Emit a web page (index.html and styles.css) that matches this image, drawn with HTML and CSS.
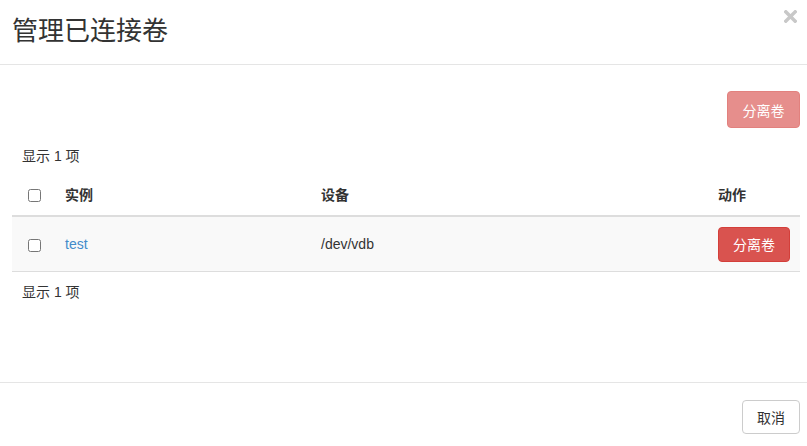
FILE: index.html
```html
<!DOCTYPE html>
<html lang="zh-CN">
<head>
<meta charset="utf-8">
<title>管理已连接卷</title>
<link rel="stylesheet" href="styles.css">
</head>
<body>
<div class="modal">
  <div class="modal-header">
    <h4 class="modal-title">管理已连接卷</h4>
    <button class="close" type="button" aria-label="关闭">
      <svg width="13" height="13" viewBox="0 0 13 13"><path d="M1.8 1.8 L11.2 11.2 M11.2 1.8 L1.8 11.2" stroke="#c8c8c8" stroke-width="3.4" stroke-linecap="square"/></svg>
    </button>
  </div>
  <div class="modal-body">
    <div class="toolbar">
      <button class="btn btn-danger disabled" type="button">分离卷</button>
    </div>
    <div class="count">显示 1 项</div>
    <table class="table">
      <colgroup>
        <col class="c-check"><col class="c-inst"><col class="c-dev"><col class="c-act">
      </colgroup>
      <thead>
        <tr>
          <th class="check"><input type="checkbox"></th>
          <th>实例</th>
          <th>设备</th>
          <th>动作</th>
        </tr>
      </thead>
      <tbody>
        <tr>
          <td class="check"><input type="checkbox"></td>
          <td><a href="#">test</a></td>
          <td>/dev/vdb</td>
          <td><button class="btn btn-danger btn-row" type="button">分离卷</button></td>
        </tr>
      </tbody>
    </table>
    <div class="count">显示 1 项</div>
  </div>
  <div class="modal-footer">
    <button class="btn btn-default" type="button">取消</button>
  </div>
</div>
</body>
</html>
```

FILE: styles.css
```css
html, body {
  margin: 0;
  padding: 0;
  background: #fff;
}
body {
  font-family: "Liberation Sans", "Noto Sans CJK SC", sans-serif;
  font-size: 14px;
  line-height: 20px;
  color: #333;
  overflow: hidden;
}
.modal {
  width: 807px;
  height: 446px;
  background: #fff;
}
.modal-header {
  position: relative;
  box-sizing: border-box;
  height: 65px;
  padding: 14px 12px 0 12px;
  border-bottom: 1px solid #e5e5e5;
}
.modal-title {
  margin: 0;
  font-size: 26px;
  line-height: 30px;
  font-weight: normal;
  color: #333;
  font-family: "Noto Sans CJK SC", sans-serif;
}
.close {
  position: absolute;
  top: 10px;
  right: 10px;
  padding: 0;
  margin: 0;
  border: 0;
  background: none;
  width: 13px;
  height: 13px;
  line-height: 0;
}
.modal-body {
  height: 317px;
  box-sizing: border-box;
  padding: 26px 7px 0 12px;
}
.toolbar {
  display: flex;
  justify-content: flex-end;
}
.btn {
  font-family: "Noto Sans CJK SC", sans-serif;
  font-size: 14px;
  border: 1px solid transparent;
  border-radius: 4px;
  padding: 0 14px;
  box-sizing: border-box;
  cursor: pointer;
}
.btn-danger {
  background: #d9534f;
  border-color: #d43f3a;
  color: #fff;
  height: 36px;
  line-height: 34px;
}
.btn-danger.disabled {
  opacity: .65;
  height: 37px;
  padding: 0 14.5px;
}
.count {
  margin-top: 18px;
  padding-left: 10px;
  line-height: 20px;
}
.table {
  width: 788px;
  margin-top: 8px;
  border-collapse: collapse;
  table-layout: fixed;
}
.c-check { width: 45px; }
.c-inst { width: 256px; }
.c-dev { width: 397px; }
.c-act { width: 90px; }
.table th {
  text-align: left;
  font-weight: bold;
  height: 41px;
  padding: 0 8px;
  vertical-align: middle;
  border-bottom: 2px solid #ddd;
}
.table td {
  height: 54px;
  padding: 0 8px;
  vertical-align: middle;
  background: #f9f9f9;
  border-bottom: 1px solid #ddd;
}
.table th.check, .table td.check {
  padding: 0;
  text-align: center;
}
.table input[type="checkbox"] {
  margin: 0;
  width: 13px;
  height: 13px;
  vertical-align: middle;
}
.table a {
  color: #428bca;
  text-decoration: none;
}
.btn-row {
  height: 35px;
  line-height: 33px;
}
.table + .count {
  margin-top: 10px;
}
.modal-footer {
  border-top: 1px solid #e5e5e5;
  padding: 17px 7px 0 0;
  display: flex;
  justify-content: flex-end;
}
.btn-default {
  background: #fff;
  border-color: #ccc;
  color: #333;
  height: 34px;
  line-height: 32px;
  padding: 0 14px;
}
```
